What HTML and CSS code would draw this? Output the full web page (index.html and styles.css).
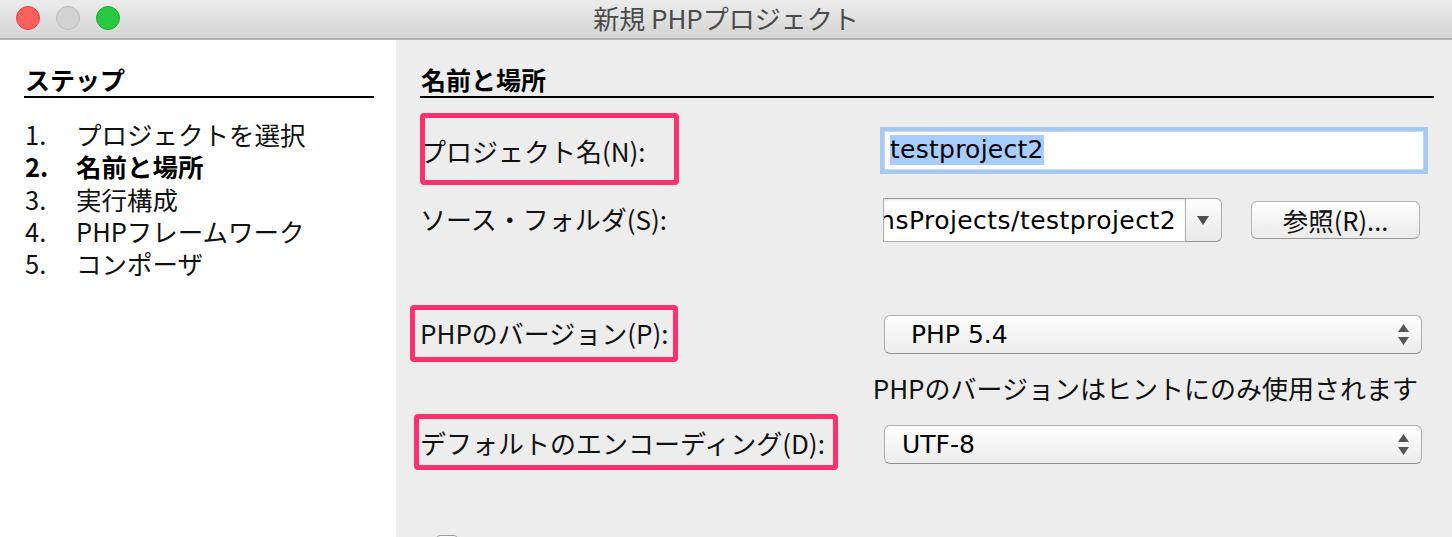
FILE: index.html
```html
<!DOCTYPE html>
<html lang="ja">
<head>
<meta charset="utf-8">
<title>新規 PHPプロジェクト</title>
<link rel="stylesheet" href="styles.css">
</head>
<body>
<div class="window">
  <header class="titlebar">
    <div class="lights">
      <span class="light red"></span>
      <span class="light gray"></span>
      <span class="light green"></span>
    </div>
    <div class="title">新規 PHPプロジェクト</div>
    <div></div>
  </header>
  <main class="main">
    <aside class="steps">
      <h2 class="heading">ステップ</h2>
      <ol class="step-list">
        <li><span class="num">1.</span><span>プロジェクトを選択</span></li>
        <li class="current"><span class="num">2.</span><span>名前と場所</span></li>
        <li><span class="num">3.</span><span>実行構成</span></li>
        <li><span class="num">4.</span><span>PHPフレームワーク</span></li>
        <li><span class="num">5.</span><span>コンポーザ</span></li>
      </ol>
    </aside>
    <section class="panel">
      <h2 class="heading">名前と場所</h2>
      <div class="form">
        <div class="row row-name">
          <label class="label"><span class="label-text">プロジェクト名(N):</span><span class="mark mark-name"></span></label>
          <div class="textfield"><span class="selected">testproject2</span></div>
        </div>
        <div class="row row-source">
          <label class="label"><span class="label-text">ソース・フォルダ(S):</span></label>
          <div class="source">
            <div class="combo">
              <div class="combo-input"><span>/Users/user/NetBeansProjects/testproject2</span></div>
              <div class="combo-arrow">
                <svg width="12" height="9" viewBox="0 0 12 9"><path d="M0 0H12L6 9Z" fill="#4f4f4f"/></svg>
              </div>
            </div>
            <button class="button">参照(R)...</button>
          </div>
        </div>
        <div class="row row-version">
          <label class="label"><span class="label-text">PHPのバージョン(P):</span><span class="mark mark-version"></span></label>
          <div class="select select-php">
            <span>PHP 5.4</span>
            <svg class="updown" width="11" height="22" viewBox="0 0 11 22"><path d="M5.5 0L11 8H0Z M0 13H11L5.5 21Z" fill="#555"/></svg>
          </div>
        </div>
        <div class="row row-hint">
          <div class="hint">PHPのバージョンはヒントにのみ使用されます</div>
        </div>
        <div class="row row-enc">
          <label class="label"><span class="label-text">デフォルトのエンコーディング(D):</span><span class="mark mark-enc"></span></label>
          <div class="select select-enc">
            <span>UTF-8</span>
            <svg class="updown" width="11" height="22" viewBox="0 0 11 22"><path d="M5.5 0L11 8H0Z M0 13H11L5.5 21Z" fill="#555"/></svg>
          </div>
        </div>
        <div class="row-check">
          <span class="checkbox"></span>
        </div>
      </div>
    </section>
  </main>
</div>
</body>
</html>
```
FILE: styles.css
```css
html, body {
  margin: 0;
  height: 537px;
  overflow: hidden;
}
body {
  font-family: "Noto Sans CJK JP", "Noto Sans", sans-serif;
  color: #111;
  background: #ededed;
}
.window {
  width: 1452px;
  height: 537px;
  display: flex;
  flex-direction: column;
  overflow: hidden;
}
.titlebar {
  flex: none;
  height: 38px;
  border-bottom: 2px solid #b3b3b3;
  background: linear-gradient(#ececec, #d4d4d4);
  display: grid;
  grid-template-columns: 1fr auto 1fr;
  align-items: center;
}
.lights {
  display: flex;
  gap: 16px;
  padding-left: 16px;
  padding-bottom: 4px;
}
.light {
  width: 22px;
  height: 22px;
  border-radius: 50%;
  border: 1px solid;
}
.red { background: #fc605c; border-color: #df4640; }
.gray { background: #d2d2d2; border-color: #bababa; }
.green { background: #2ac840; border-color: #1fa832; }
.title {
  font-size: 26px;
  line-height: 36px;
  color: #4b4b4b;
  padding-bottom: 3px;
}
.main {
  flex: 1;
  display: flex;
  min-height: 0;
}
.steps {
  flex: none;
  width: 396px;
  box-sizing: border-box;
  background: #fff;
  padding: 0 22px 0 24px;
}
.heading {
  margin: 0;
  padding: 23px 0 1px 1px;
  font-size: 25px;
  line-height: 32px;
  font-weight: bold;
  color: #000;
  border-bottom: 2px solid #000;
}
.step-list {
  list-style: none;
  margin: 20px 0 0;
  padding: 0 0 0 1px;
  font-size: 25.5px;
  line-height: 32.25px;
  color: #111;
}
.step-list li {
  display: grid;
  grid-template-columns: 51px auto;
}
.step-list .current {
  font-weight: bold;
  color: #000;
}
.panel {
  flex: 1;
  padding: 0 18px 0 24px;
}
.form {
  display: flex;
  flex-direction: column;
}
.row {
  display: grid;
  grid-template-columns: 460px 548px;
  align-items: center;
}
.label {
  position: relative;
  align-self: stretch;
  display: flex;
  align-items: center;
  font-size: 26px;
  padding-left: 0;
  padding-bottom: 4px;
  box-sizing: border-box;
}
.mark {
  position: absolute;
  border: 5px solid #fe306d;
  border-radius: 4px;
  box-sizing: border-box;
}
.row-name {
  margin-top: 28px;
  height: 48px;
}
.row-name .label { padding-bottom: 0; }
.mark-name {
  left: 0;
  top: -13px;
  width: 259px;
  height: 72px;
}
.textfield {
  height: 47px;
  box-sizing: border-box;
  background: #fff;
  border: 4px solid #a6c9f4;
  box-shadow: inset 0 0 0 1px #c9d6e6;
  display: flex;
  align-items: center;
  padding-left: 6px;
}
.selected {
  font-family: "DejaVu Sans", sans-serif;
  font-size: 25px;
  letter-spacing: 0.25px;
  line-height: 30px;
  background: #a6cdfd;
  color: #000;
}
.row-source {
  margin-top: 24px;
  height: 44px;
}
.source {
  display: flex;
  align-items: center;
  padding-left: 3px;
}
.combo {
  display: flex;
  width: 339px;
  height: 44px;
}
.combo-input {
  width: 303px;
  box-sizing: border-box;
  background: #fff;
  border: 1px solid #b0b0b0;
  border-top-color: #9a9a9a;
  box-shadow: inset 0 1px 2px rgba(0, 0, 0, 0.12);
  overflow: hidden;
  display: flex;
  justify-content: flex-end;
  align-items: center;
  padding-right: 9px;
  white-space: nowrap;
  font-family: "DejaVu Sans", sans-serif;
  font-size: 25px;
  letter-spacing: 0.45px;
  color: #000;
}
.combo-arrow {
  width: 36px;
  box-sizing: border-box;
  border: 1px solid #ababab;
  border-left: none;
  border-bottom-color: #959595;
  border-radius: 0 6px 6px 0;
  background: linear-gradient(#ffffff, #f2f2f2 50%, #e9e9e9);
  display: flex;
  align-items: center;
  justify-content: center;
  padding-right: 2px;
}
.button {
  margin-left: 29px;
  width: 169px;
  height: 38px;
  border: 1px solid #b3b3b3;
  border-bottom-color: #979797;
  border-radius: 6px;
  background: linear-gradient(#ffffff, #f3f3f3 50%, #ebebeb);
  font-family: "Noto Sans CJK JP", sans-serif;
  font-size: 25.5px;
  color: #111;
  padding: 0;
  line-height: 34px;
}
.row-version {
  margin-top: 72px;
  height: 39px;
}
.mark-version {
  left: -10px;
  top: -9px;
  width: 268px;
  height: 57px;
}
.select {
  margin-left: 4px;
  width: 538px;
  height: 39px;
  box-sizing: border-box;
  border: 1px solid #adadad;
  border-bottom-color: #8f8f8f;
  border-radius: 6px;
  background: linear-gradient(#ffffff, #f6f6f6 45%, #ececec);
  display: flex;
  align-items: center;
  justify-content: space-between;
  padding-right: 12px;
  font-family: "DejaVu Sans", sans-serif;
  font-size: 25px;
  color: #000;
}
.select-php { padding-left: 26px; }
.select-enc { padding-left: 17px; }
.row-hint {
  margin-top: 19px;
  height: 34px;
  display: flex;
  justify-content: flex-end;
  width: 1008px;
}
.hint {
  font-size: 26px;
  line-height: 34px;
  padding-right: 10px;
  padding-bottom: 3px;
  color: #111;
}
.row-enc {
  margin-top: 18px;
  height: 39px;
}
.mark-enc {
  left: -6px;
  top: -10px;
  width: 424px;
  height: 56px;
}
.row-check {
  margin-top: 72px;
  display: flex;
  padding-left: 16px;
}
.checkbox {
  width: 22px;
  height: 22px;
  box-sizing: border-box;
  border: 1px solid #9d9d9d;
  border-radius: 4px;
  background: linear-gradient(#fafafa, #e6e6e6);
}
```
